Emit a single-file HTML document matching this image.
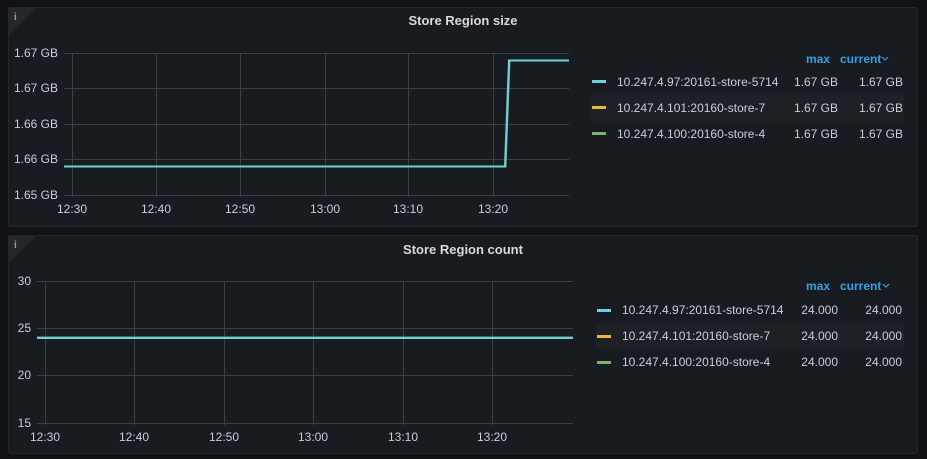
<!DOCTYPE html>
<html><head><meta charset="utf-8"><style>
body{margin:0;width:927px;height:459px;background:#111217;overflow:hidden;font-family:"Liberation Sans",Arial,sans-serif}
svg{position:absolute;left:0;top:0}
text{font-family:"Liberation Sans",Arial,sans-serif}
</style></head><body>
<svg width="927" height="459" viewBox="0 0 927 459">
<rect x="8.5" y="7.5" width="909" height="219" rx="2" fill="#181b1f" stroke="#25272c"/>
<path d="M9 8H36L9 35Z" fill="#24272b"/>
<text x="14" y="20" fill="#9fa0a6" font-size="10" font-weight="bold" font-family="Liberation Serif">i</text>
<text x="463" y="25" fill="#d8d9da" font-size="13" font-weight="bold" text-anchor="middle">Store Region size</text>
<g stroke="#3d3f44" stroke-width="1">
<path d="M64 53.5H569M64 88.5H569M64 124.5H569M64 159.5H569M64 195.5H569"/>
<path d="M72.5 53V197M156.5 53V197M240.5 53V197M325.5 53V197M408.5 53V197M493.5 53V197"/>
</g>
<g fill="#ccccdc" font-size="12">
<text x="58" y="57" text-anchor="end">1.67 GB</text>
<text x="58" y="92" text-anchor="end">1.67 GB</text>
<text x="58" y="128" text-anchor="end">1.66 GB</text>
<text x="58" y="163" text-anchor="end">1.66 GB</text>
<text x="58" y="199" text-anchor="end">1.65 GB</text>
<g text-anchor="middle"><text x="72" y="213">12:30</text><text x="156" y="213">12:40</text><text x="240" y="213">12:50</text><text x="325" y="213">13:00</text><text x="408" y="213">13:10</text><text x="493" y="213">13:20</text></g>
</g>
<path d="M64 166.5H505.5L509.5 60.5H569" fill="none" stroke="#7eb26d" stroke-width="2"/>
<path d="M64 166.5H505L509 60.5H569" fill="none" stroke="#6ed0e0" stroke-width="2"/>
<text x="830" y="63" fill="#33a2e5" font-size="12" font-weight="bold" text-anchor="end">max</text>
<text x="840" y="63" fill="#33a2e5" font-size="12" font-weight="bold">current</text>
<path d="M882 57l3 3 3-3" fill="none" stroke="#33a2e5" stroke-width="1.2"/>
<rect x="590" y="95" width="314" height="26" fill="#1d2024"/>
<rect x="592" y="80" width="14" height="3" fill="#6ed0e0"/>
<rect x="592" y="106" width="14" height="3" fill="#eab839"/>
<rect x="592" y="132" width="14" height="3" fill="#7eb26d"/>
<g fill="#ccccdc" font-size="12">
<text x="617" y="86">10.247.4.97:20161-store-5714</text>
<text x="617" y="112">10.247.4.101:20160-store-7</text>
<text x="617" y="138">10.247.4.100:20160-store-4</text>
<g text-anchor="end"><text x="838" y="86">1.67 GB</text><text x="838" y="112">1.67 GB</text><text x="838" y="138">1.67 GB</text>
<text x="903" y="86">1.67 GB</text><text x="903" y="112">1.67 GB</text><text x="903" y="138">1.67 GB</text></g>
</g>
<rect x="8.5" y="235.5" width="909" height="218" rx="2" fill="#181b1f" stroke="#25272c"/>
<path d="M9 236H36L9 263Z" fill="#24272b"/>
<text x="14" y="248" fill="#9fa0a6" font-size="10" font-weight="bold" font-family="Liberation Serif">i</text>
<text x="463" y="254" fill="#d8d9da" font-size="13" font-weight="bold" text-anchor="middle">Store Region count</text>
<g stroke="#3d3f44" stroke-width="1">
<path d="M37 281.5H573M37 328.5H573M37 375.5H573M37 423.5H573"/>
<path d="M45.5 281V425M134.5 281V425M224.5 281V425M313.5 281V425M403.5 281V425M492.5 281V425"/>
</g>
<g fill="#ccccdc" font-size="12">
<text x="31" y="285" text-anchor="end">30</text>
<text x="31" y="332" text-anchor="end">25</text>
<text x="31" y="379" text-anchor="end">20</text>
<text x="31" y="427" text-anchor="end">15</text>
<g text-anchor="middle"><text x="45" y="441">12:30</text><text x="134" y="441">12:40</text><text x="224" y="441">12:50</text><text x="313" y="441">13:00</text><text x="403" y="441">13:10</text><text x="492" y="441">13:20</text></g>
</g>
<path d="M37 337.5H573" stroke="#7eb26d" stroke-width="2"/>
<path d="M37 338H573" stroke="#6ed0e0" stroke-width="2"/>
<text x="830" y="290" fill="#33a2e5" font-size="12" font-weight="bold" text-anchor="end">max</text>
<text x="840" y="290" fill="#33a2e5" font-size="12" font-weight="bold">current</text>
<path d="M883 284l3 3 3-3" fill="none" stroke="#33a2e5" stroke-width="1.2"/>
<rect x="595" y="323" width="309" height="26" fill="#1d2024"/>
<rect x="597" y="309" width="14" height="3" fill="#6ed0e0"/>
<rect x="597" y="335" width="14" height="3" fill="#eab839"/>
<rect x="597" y="361" width="14" height="3" fill="#7eb26d"/>
<g fill="#ccccdc" font-size="12">
<text x="622" y="314">10.247.4.97:20161-store-5714</text>
<text x="622" y="340">10.247.4.101:20160-store-7</text>
<text x="622" y="366">10.247.4.100:20160-store-4</text>
<g text-anchor="end"><text x="838" y="314">24.000</text><text x="838" y="340">24.000</text><text x="838" y="366">24.000</text>
<text x="902" y="314">24.000</text><text x="902" y="340">24.000</text><text x="902" y="366">24.000</text></g>
</g>
</svg>
</body></html>
